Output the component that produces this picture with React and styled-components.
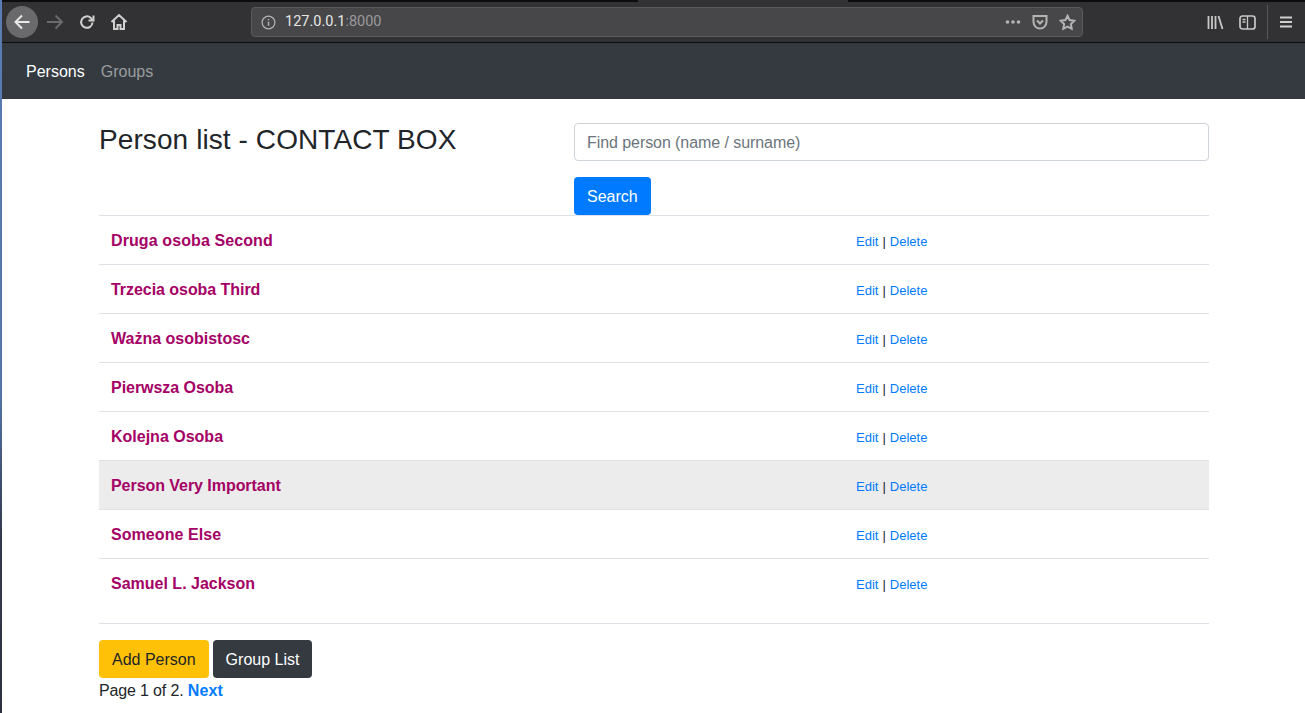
import React from 'react';
import styled, { createGlobalStyle } from 'styled-components';

const persons = [
  { name: 'Druga osoba Second', track: 0.1 },
  { name: 'Trzecia osoba Third', track: -0.05 },
  { name: 'Ważna osobistosc', track: 0 },
  { name: 'Pierwsza Osoba', track: -0.04 },
  { name: 'Kolejna Osoba', track: 0 },
  { name: 'Person Very Important', track: -0.05 },
  { name: 'Someone Else', track: 0.06 },
  { name: 'Samuel L. Jackson', track: 0 },
];

const App = () => {
  return (
    <Page>
      <GlobalStyle />
      <TopEdge>
        <TopTab />
      </TopEdge>
      <BrowserBar>
        <BackButton>
          <Icon width="20" height="20" viewBox="0 0 20 20" color="#e8e8e8">
            <path d="M17.500 10H4M10 3.500 3.500 10l6.500 6.500" strokeWidth="2" />
          </Icon>
        </BackButton>
        <ToolSlot>
          <Icon width="20" height="20" viewBox="0 0 20 20" color="#6b6b6b">
            <path d="M2 10h15M10.500 3.500 17 10l-6.500 6.500" strokeWidth="2" />
          </Icon>
        </ToolSlot>
        <ToolSlot>
          <Icon width="18" height="18" viewBox="0 0 18 18" color="#d0d0d0">
            <path d="M14.500 9.500a5.700 5.700 0 1 1-1.700-4.500L15 7.200" strokeWidth="2" />
            <path d="M15.500 2.500v5h-5" strokeWidth="2" />
          </Icon>
        </ToolSlot>
        <ToolSlot>
          <Icon width="18" height="18" viewBox="0 0 18 18" color="#d0d0d0">
            <path d="M1.500 9 9 2l7.500 7M4 7.500V16h3.500v-4h3v4H14V7.500" strokeWidth="2" />
          </Icon>
        </ToolSlot>
        <UrlBar>
          <Icon width="15" height="15" viewBox="0 0 16 16" color="#b4b4b4">
            <circle cx="8" cy="8" r="6.800" strokeWidth="1.300" />
            <path d="M8 7.200v4.300M8 4.300v1.400" strokeWidth="1.500" />
          </Icon>
          <UrlText>
            127.0.0.1<UrlPort>:8000</UrlPort>
          </UrlText>
          <UrlActions>
            <Icon width="16" height="6" viewBox="0 0 16 6" color="#b4b4b4">
              <circle cx="2.500" cy="3" r="1.800" fill="#b4b4b4" stroke="none" />
              <circle cx="8" cy="3" r="1.800" fill="#b4b4b4" stroke="none" />
              <circle cx="13.500" cy="3" r="1.800" fill="#b4b4b4" stroke="none" />
            </Icon>
            <Icon width="16" height="16" viewBox="0 0 16 16" color="#b4b4b4">
              <path d="M1.500 2h13v6a6.500 6.500 0 0 1-13 0zM5 6.500l3 3 3-3" strokeWidth="2" />
            </Icon>
            <Icon width="17" height="17" viewBox="0 0 17 17" color="#b4b4b4">
              <path d="m8.500 1.800 2.100 4.300 4.700.7-3.400 3.300.8 4.700-4.200-2.200-4.200 2.200.8-4.700-3.400-3.300 4.700-.7z" strokeWidth="2" />
            </Icon>
          </UrlActions>
        </UrlBar>
        <RightTools>
          <Icon width="17" height="15" viewBox="0 0 17 15" color="#c8c8c8">
            <path d="M1.500 1v13M5 1v13M8.500 1v13M11.500 1l4 13" strokeWidth="1.800" />
          </Icon>
          <Icon width="17" height="15" viewBox="0 0 17 15" color="#c8c8c8">
            <rect x="1" y="1" width="15" height="13" rx="2.500" strokeWidth="1.700" />
            <path d="M8.500 1v13M3.500 4.500h3M3.500 7h3" strokeWidth="1.300" />
          </Icon>
          <ToolDivider />
          <Icon width="14" height="12" viewBox="0 0 14 12" color="#d0d0d0">
            <path d="M1 1.500h12M1 6h12M1 10.500h12" strokeWidth="1.800" />
          </Icon>
        </RightTools>
      </BrowserBar>
      <Navbar>
        <NavLink $active>Persons</NavLink>
        <NavLink>Groups</NavLink>
      </Navbar>
      <Container>
        <Header>
          <Title>Person list - CONTACT BOX</Title>
          <SearchForm>
            <SearchInput placeholder="Find person (name / surname)" />
            <Button $variant="primary">Search</Button>
          </SearchForm>
        </Header>
        <PersonList>
          {persons.map(({ name, track }) => (
            <PersonRow key={name} $highlight={name === 'Person Very Important'}>
              <PersonName $track={track}>{name}</PersonName>
              <RowActions>
                <SmallLink>Edit</SmallLink> | <SmallLink>Delete</SmallLink>
              </RowActions>
            </PersonRow>
          ))}
        </PersonList>
        <Footer>
          <ButtonRow>
            <Button $variant="warning">Add Person</Button>
            <Button $variant="dark">Group List</Button>
          </ButtonRow>
          <Pager>
            Page 1 of 2. <NextLink>Next</NextLink>
          </Pager>
        </Footer>
      </Container>
    </Page>
  );
};

export default App;

const GlobalStyle = createGlobalStyle`
  html, body {
    margin: 0;
    padding: 0;
    background: #fff;
    overflow: hidden;
  }
  * {
    box-sizing: border-box;
  }
`;

const Page = styled.div`
  width: 1305px;
  height: 713px;
  overflow: hidden;
  font-family: 'Liberation Sans', Arial, sans-serif;
  font-size: 16px;
  line-height: 24px;
  color: #212529;
  border-left: 2px solid;
  border-image: linear-gradient(#5b7cb4, #5575a8 55%, #33394d 75%, #2c3040) 1;
`;

const TopEdge = styled.div`
  height: 2px;
  background: #0c0c0d;
  display: flex;
  justify-content: flex-start;
`;

const TopTab = styled.div`
  width: 210px;
  margin-left: 636px;
  background: #323234;
`;

const BrowserBar = styled.div`
  height: 41px;
  display: flex;
  align-items: center;
  padding-left: 4px;
  background: #323234;
  border-bottom: 1px solid #0c0c0d;
`;

const Icon = styled.svg`
  flex: none;
  fill: none;
  stroke: currentColor;
`;

const BackButton = styled.div`
  width: 32px;
  height: 32px;
  border-radius: 50%;
  background: #6a6a6c;
  display: flex;
  align-items: center;
  justify-content: center;
`;

const ToolSlot = styled.div`
  width: 32px;
  height: 32px;
  display: flex;
  align-items: center;
  justify-content: center;
  padding-left: 2px;
`;

const UrlBar = styled.div`
  width: 832px;
  height: 30px;
  margin-left: 117px;
  padding: 0 6px 0 9px;
  display: flex;
  align-items: center;
  background: #474749;
  border: 1px solid #5a5a5c;
  border-radius: 4px;
`;

const UrlText = styled.span`
  margin-left: 9px;
  font-family: 'Roboto', 'Liberation Sans', sans-serif;
  font-size: 14.500px;
  color: #e6e6e6;
`;

const UrlPort = styled.span`
  color: #9a9a9c;
`;

const UrlActions = styled.div`
  margin-left: auto;
  display: flex;
  align-items: center;
  gap: 11px;
`;

const RightTools = styled.div`
  margin-left: 124px;
  display: flex;
  align-items: center;
  gap: 15px;
`;

const ToolDivider = styled.div`
  width: 1px;
  height: 34px;
  margin: 0 -4px 0 -4px;
  background: #58585a;
`;

const Navbar = styled.nav`
  height: 56px;
  padding: 2px 16px 0;
  display: flex;
  align-items: center;
  background: #343a40;
`;

const NavLink = styled.a`
  padding: 0 8px;
  color: ${(p) => (p.$active ? '#fff' : 'rgba(255, 255, 255, 0.5)')};
`;

const Container = styled.main`
  width: 1110px;
  margin-left: 97px;
`;

const Header = styled.div`
  display: flex;
`;

const Title = styled.h1`
  width: 475px;
  margin: 24px 0 0;
  font-size: 28px;
  font-weight: 400;
  line-height: 34px;
  letter-spacing: 0.09px;
`;

const SearchForm = styled.form`
  flex: 1;
  padding-top: 24px;
`;

const SearchInput = styled.input`
  display: block;
  width: 100%;
  height: 38px;
  margin-bottom: 16px;
  padding: 8px 12px 6px;
  font: inherit;
  border: 1px solid #ced4da;
  border-radius: 4px;
  &::placeholder {
    color: #6c757d;
    opacity: 1;
    letter-spacing: -0.07px;
  }
`;

const variants = {
  primary: 'background: #007bff; color: #fff;',
  warning: 'background: #ffc107; color: #212529;',
  dark: 'background: #343a40; color: #fff;',
};

const Button = styled.button`
  height: 38px;
  padding: 2px 13px 0;
  font: inherit;
  border: none;
  border-radius: 4px;
  ${(p) => variants[p.$variant]}
`;

const PersonList = styled.div`
  height: 409px;
  border-bottom: 1px solid #dee2e6;
`;

const PersonRow = styled.div`
  height: 49px;
  padding: 2px 12px 0;
  display: flex;
  align-items: center;
  border-top: 1px solid #dee2e6;
  background: ${(p) => (p.$highlight ? '#ececec' : 'transparent')};
`;

const PersonName = styled.strong`
  width: 745px;
  color: #a50065;
  letter-spacing: ${(p) => p.$track}px;
`;

const RowActions = styled.span`
  font-size: 13px;
  padding-top: 2px;
  word-spacing: 0.4px;
`;

const SmallLink = styled.a`
  color: #007bff;
`;

const Footer = styled.div`
  padding-top: 16px;
`;

const ButtonRow = styled.div`
  display: flex;
  gap: 4px;
`;

const Pager = styled.div`
  padding-top: 1px;
  letter-spacing: -0.15px;
`;

const NextLink = styled.a`
  color: #007bff;
  font-weight: 700;
  letter-spacing: 0.1px;
`;
